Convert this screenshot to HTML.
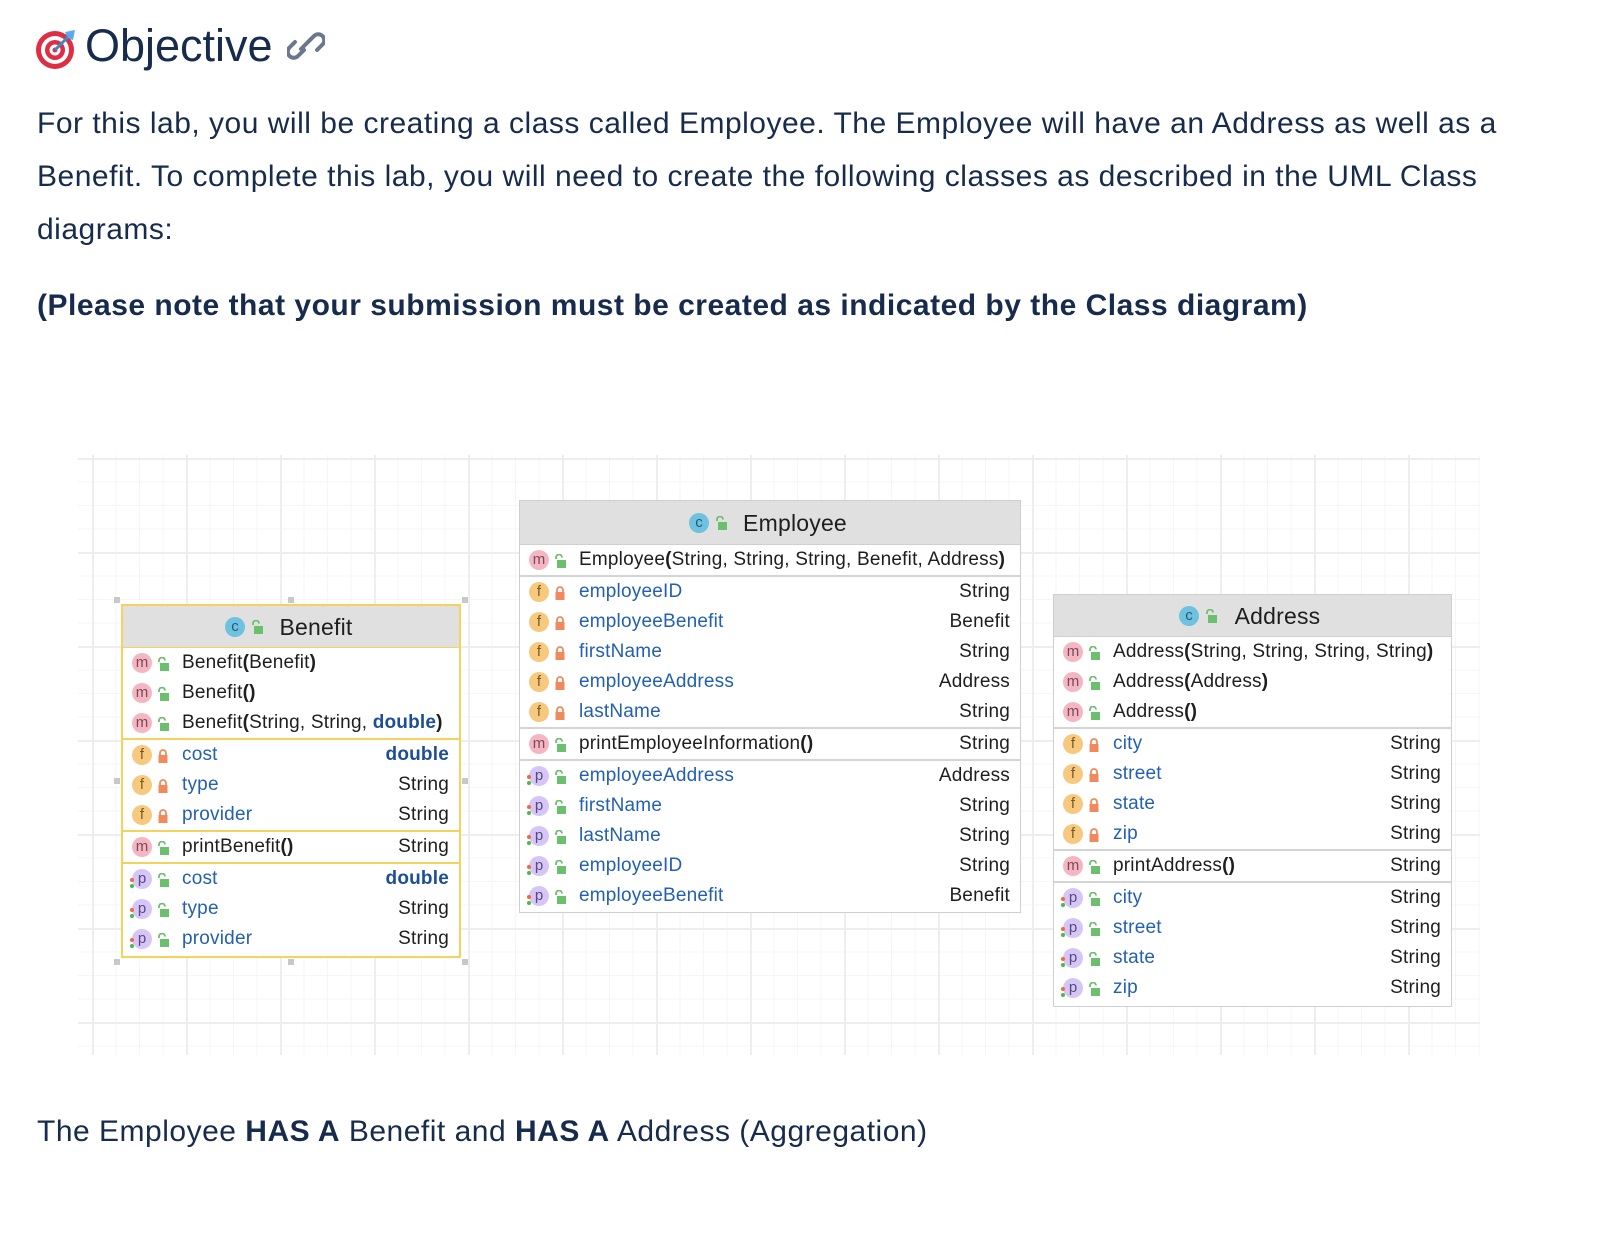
<!DOCTYPE html>
<html><head><meta charset="utf-8">
<style>
*{box-sizing:border-box;margin:0;padding:0}
body{width:1604px;height:1254px;background:#fff;font-family:"Liberation Sans",Arial,sans-serif;color:#172b4d;position:relative;overflow:hidden}
.abs{position:absolute}
h1{position:absolute;left:85px;top:20px;font-size:45px;font-weight:400;letter-spacing:0px;line-height:52px}
.p{position:absolute;left:37px;font-size:30px;letter-spacing:0.5px;line-height:53px;white-space:nowrap}
.grid{position:absolute;left:78px;top:455px;width:1402px;height:600px;
background-image:
linear-gradient(to right,#eeeeee 2px,transparent 2px),
linear-gradient(to bottom,#eeeeee 2px,transparent 2px),
linear-gradient(to right,#f6f6f6 1px,transparent 1px),
linear-gradient(to bottom,#f6f6f6 1px,transparent 1px);
background-size:94px 94px,94px 94px,23.5px 23.5px,23.5px 23.5px;
background-position:14px 0,0 3px,14px 0,0 3px}
.box{position:absolute;background:#fff;border:1.5px solid #cfcfcf;font-size:19px;letter-spacing:0.2px;color:#1e1e1e}
.box.sel{border:2px solid #f5d25a}
.hd{height:42px;background:#e0e0e0;border-bottom:1.5px solid #cfcfcf;text-align:center;font-size:23px;line-height:42px;position:relative}
.sel .hd{border-bottom-color:#f5d25a}
.sec{border-top:2px solid #d4d4d4}
.sel .sec{border-top-color:#f5d25a}
.sec.first{border-top:none}
.r{height:30px;position:relative;line-height:30px;white-space:nowrap}
.ic{position:absolute;left:9px;top:5px;width:20px;height:20px;border-radius:50%;font-size:15px;line-height:20px;text-align:center;letter-spacing:0}
.m{background:#f5b6c3;color:#7a4a55}
.f{background:#f6c97e;color:#7a5a20}
.pp{background:#d6c6f7;color:#5a4a7a}
.c{background:#6ec2e0;color:#2a5a70}
.lk{position:absolute;left:34px;top:9px}
.t{position:absolute;left:59px}
.ty{position:absolute;right:10px}
.bl{color:#2360b3}
.bd{color:#1d4e98;font-weight:700}
.dots{position:absolute;left:7px;top:14px;width:4px;height:10px}
.dots:before{content:"";position:absolute;left:0;top:0;width:4px;height:4px;border-radius:50%;background:#f06a3a}
.dots:after{content:"";position:absolute;left:0;top:6px;width:4px;height:4px;border-radius:50%;background:#4cb84c}
.hs{position:absolute;width:6px;height:6px;background:#c8c8c8}
</style></head><body>

<svg class="abs" style="left:35px;top:28px" width="42" height="42" viewBox="0 0 42 42">
<circle cx="20" cy="22" r="19" fill="#dd2e44"/><circle cx="20" cy="22" r="14" fill="#fff"/><circle cx="20" cy="22" r="10" fill="#dd2e44"/><circle cx="20" cy="22" r="5.5" fill="#fff"/><circle cx="20" cy="22" r="2.5" fill="#dd2e44"/>
<path d="M20 22 L34 8" stroke="#3b88c3" stroke-width="3"/><path d="M30 4 L40 2 L38 12 L33 10 Z" fill="#55acee"/>
</svg>
<h1>Objective</h1>
<svg class="abs" style="left:287px;top:29px" width="38" height="34" viewBox="0 0 38 34" fill="none" stroke="#6b778c" stroke-width="4" stroke-linecap="round">
<path d="M17 21 L11 27 a6 6 0 0 1 -8.5 -8.5 L8 13"/><path d="M21 13 L27 7 a6 6 0 0 1 8.5 8.5 L30 21"/><path d="M14 20 L24 10"/>
</svg>

<div class="p" style="top:97px">For this lab, you will be creating a class called Employee. The Employee will have an Address as well as a</div>
<div class="p" style="top:150px">Benefit. To complete this lab, you will need to create the following classes as described in the UML Class</div>
<div class="p" style="top:203px">diagrams:</div>
<div class="p" style="top:279px;font-weight:700">(Please note that your submission must be created as indicated by the Class diagram)</div>

<div class="grid"></div>

<div class="hs" style="left:114px;top:597px"></div><div class="hs" style="left:288px;top:597px"></div><div class="hs" style="left:462px;top:597px"></div>
<div class="hs" style="left:114px;top:778px"></div><div class="hs" style="left:462px;top:778px"></div>
<div class="hs" style="left:114px;top:959px"></div><div class="hs" style="left:288px;top:959px"></div><div class="hs" style="left:462px;top:959px"></div>

<svg width="0" height="0" style="position:absolute">
<defs>
<symbol id="op" viewBox="0 0 12 14"><path d="M2 5 V3.5 a3 3 0 0 1 6 0" fill="none" stroke="#6cbf6c" stroke-width="1.8"/><rect x="3" y="6" width="9" height="8" fill="#6cbf6c"/></symbol>
<symbol id="cl" viewBox="0 0 12 14"><path d="M3 6 V4 a3 3 0 0 1 6 0 V6" fill="none" stroke="#f08a5d" stroke-width="1.8"/><rect x="1.5" y="6" width="9" height="8" fill="#f08a5d"/></symbol>
</defs></svg>

<!-- Benefit -->
<div class="box sel" style="left:121px;top:604px;width:340px;height:354px">
<div class="hd"><span class="ic c" style="position:absolute;left:102px;top:11px">c</span><svg style="position:absolute;left:128px;top:14px" width="12" height="14"><use href="#op"/></svg><span style="margin-left:50px">Benefit</span></div>
<div class="sec first">
<div class="r"><span class="ic m">m</span><svg class="lk" width="12" height="14"><use href="#op"/></svg><span class="t">Benefit<b>(</b>Benefit<b>)</b></span></div>
<div class="r"><span class="ic m">m</span><svg class="lk" width="12" height="14"><use href="#op"/></svg><span class="t">Benefit<b>()</b></span></div>
<div class="r"><span class="ic m">m</span><svg class="lk" width="12" height="14"><use href="#op"/></svg><span class="t">Benefit<b>(</b>String, String, <span class="bd">double</span><b>)</b></span></div>
</div>
<div class="sec">
<div class="r"><span class="ic f">f</span><svg class="lk" width="12" height="14"><use href="#cl"/></svg><span class="t bl">cost</span><span class="ty bd">double</span></div>
<div class="r"><span class="ic f">f</span><svg class="lk" width="12" height="14"><use href="#cl"/></svg><span class="t bl">type</span><span class="ty">String</span></div>
<div class="r"><span class="ic f">f</span><svg class="lk" width="12" height="14"><use href="#cl"/></svg><span class="t bl">provider</span><span class="ty">String</span></div>
</div>
<div class="sec">
<div class="r"><span class="ic m">m</span><svg class="lk" width="12" height="14"><use href="#op"/></svg><span class="t">printBenefit<b>()</b></span><span class="ty">String</span></div>
</div>
<div class="sec">
<div class="r"><span class="ic pp">p</span><span class="dots"></span><svg class="lk" width="12" height="14"><use href="#op"/></svg><span class="t bl">cost</span><span class="ty bd">double</span></div>
<div class="r"><span class="ic pp">p</span><span class="dots"></span><svg class="lk" width="12" height="14"><use href="#op"/></svg><span class="t bl">type</span><span class="ty">String</span></div>
<div class="r"><span class="ic pp">p</span><span class="dots"></span><svg class="lk" width="12" height="14"><use href="#op"/></svg><span class="t bl">provider</span><span class="ty">String</span></div>
</div>
</div>

<!-- Employee -->
<div class="box" style="left:519px;top:500px;width:502px;height:413px">
<div class="hd" style="height:44px;line-height:44px"><span class="ic c" style="position:absolute;left:169px;top:12px">c</span><svg style="position:absolute;left:195px;top:15px" width="12" height="14"><use href="#op"/></svg><span style="margin-left:50px">Employee</span></div>
<div class="sec first">
<div class="r"><span class="ic m">m</span><svg class="lk" width="12" height="14"><use href="#op"/></svg><span class="t">Employee<b>(</b>String, String, String, Benefit, Address<b>)</b></span></div>
</div>
<div class="sec">
<div class="r"><span class="ic f">f</span><svg class="lk" width="12" height="14"><use href="#cl"/></svg><span class="t bl">employeeID</span><span class="ty">String</span></div>
<div class="r"><span class="ic f">f</span><svg class="lk" width="12" height="14"><use href="#cl"/></svg><span class="t bl">employeeBenefit</span><span class="ty">Benefit</span></div>
<div class="r"><span class="ic f">f</span><svg class="lk" width="12" height="14"><use href="#cl"/></svg><span class="t bl">firstName</span><span class="ty">String</span></div>
<div class="r"><span class="ic f">f</span><svg class="lk" width="12" height="14"><use href="#cl"/></svg><span class="t bl">employeeAddress</span><span class="ty">Address</span></div>
<div class="r"><span class="ic f">f</span><svg class="lk" width="12" height="14"><use href="#cl"/></svg><span class="t bl">lastName</span><span class="ty">String</span></div>
</div>
<div class="sec">
<div class="r"><span class="ic m">m</span><svg class="lk" width="12" height="14"><use href="#op"/></svg><span class="t">printEmployeeInformation<b>()</b></span><span class="ty">String</span></div>
</div>
<div class="sec">
<div class="r"><span class="ic pp">p</span><span class="dots"></span><svg class="lk" width="12" height="14"><use href="#op"/></svg><span class="t bl">employeeAddress</span><span class="ty">Address</span></div>
<div class="r"><span class="ic pp">p</span><span class="dots"></span><svg class="lk" width="12" height="14"><use href="#op"/></svg><span class="t bl">firstName</span><span class="ty">String</span></div>
<div class="r"><span class="ic pp">p</span><span class="dots"></span><svg class="lk" width="12" height="14"><use href="#op"/></svg><span class="t bl">lastName</span><span class="ty">String</span></div>
<div class="r"><span class="ic pp">p</span><span class="dots"></span><svg class="lk" width="12" height="14"><use href="#op"/></svg><span class="t bl">employeeID</span><span class="ty">String</span></div>
<div class="r"><span class="ic pp">p</span><span class="dots"></span><svg class="lk" width="12" height="14"><use href="#op"/></svg><span class="t bl">employeeBenefit</span><span class="ty">Benefit</span></div>
</div>
</div>

<!-- Address -->
<div class="box" style="left:1053px;top:594px;width:399px;height:413px">
<div class="hd"><span class="ic c" style="position:absolute;left:125px;top:11px">c</span><svg style="position:absolute;left:151px;top:14px" width="12" height="14"><use href="#op"/></svg><span style="margin-left:50px">Address</span></div>
<div class="sec first">
<div class="r"><span class="ic m">m</span><svg class="lk" width="12" height="14"><use href="#op"/></svg><span class="t">Address<b>(</b>String, String, String, String<b>)</b></span></div>
<div class="r"><span class="ic m">m</span><svg class="lk" width="12" height="14"><use href="#op"/></svg><span class="t">Address<b>(</b>Address<b>)</b></span></div>
<div class="r"><span class="ic m">m</span><svg class="lk" width="12" height="14"><use href="#op"/></svg><span class="t">Address<b>()</b></span></div>
</div>
<div class="sec">
<div class="r"><span class="ic f">f</span><svg class="lk" width="12" height="14"><use href="#cl"/></svg><span class="t bl">city</span><span class="ty">String</span></div>
<div class="r"><span class="ic f">f</span><svg class="lk" width="12" height="14"><use href="#cl"/></svg><span class="t bl">street</span><span class="ty">String</span></div>
<div class="r"><span class="ic f">f</span><svg class="lk" width="12" height="14"><use href="#cl"/></svg><span class="t bl">state</span><span class="ty">String</span></div>
<div class="r"><span class="ic f">f</span><svg class="lk" width="12" height="14"><use href="#cl"/></svg><span class="t bl">zip</span><span class="ty">String</span></div>
</div>
<div class="sec">
<div class="r"><span class="ic m">m</span><svg class="lk" width="12" height="14"><use href="#op"/></svg><span class="t">printAddress<b>()</b></span><span class="ty">String</span></div>
</div>
<div class="sec">
<div class="r"><span class="ic pp">p</span><span class="dots"></span><svg class="lk" width="12" height="14"><use href="#op"/></svg><span class="t bl">city</span><span class="ty">String</span></div>
<div class="r"><span class="ic pp">p</span><span class="dots"></span><svg class="lk" width="12" height="14"><use href="#op"/></svg><span class="t bl">street</span><span class="ty">String</span></div>
<div class="r"><span class="ic pp">p</span><span class="dots"></span><svg class="lk" width="12" height="14"><use href="#op"/></svg><span class="t bl">state</span><span class="ty">String</span></div>
<div class="r"><span class="ic pp">p</span><span class="dots"></span><svg class="lk" width="12" height="14"><use href="#op"/></svg><span class="t bl">zip</span><span class="ty">String</span></div>
</div>
</div>

<div class="p" style="top:1105px">The Employee <b>HAS A</b> Benefit and <b>HAS A</b> Address (Aggregation)</div>

</body></html>
